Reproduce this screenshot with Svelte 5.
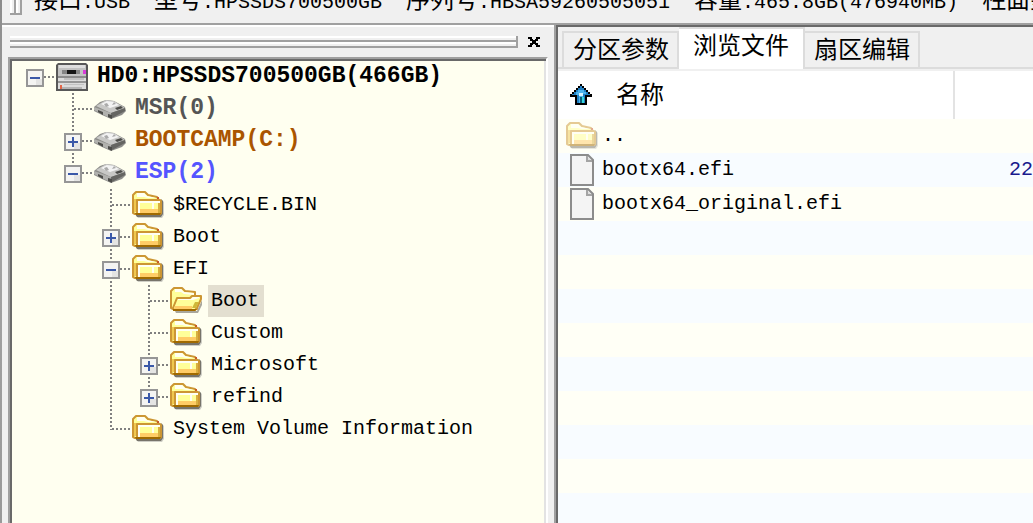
<script>
  const info = [
    ['接口', ':USB'],
    ['型号', ':HPSSDS700500GB'],
    ['序列号', ':HBSA59260505051'],
    ['容量', ':465.8GB(476940MB)'],
    ['柱面数', ':60801']
  ];

  // guides: one entry per indent column; b = blank, v = line, t = tee, e = elbow, r = root
  let nodes = $state([
    { label: 'HD0:HPSSDS700500GB(466GB)', icon: 'disk', guides: 'r', open: true, tone: 'black' },
    { label: 'MSR(0)', icon: 'volume', guides: 'bt', tone: 'gray' },
    { label: 'BOOTCAMP(C:)', icon: 'volume', guides: 'bt', open: false, tone: 'brown' },
    { label: 'ESP(2)', icon: 'volume', guides: 'be', open: true, tone: 'blue' },
    { label: '$RECYCLE.BIN', icon: 'folder', guides: 'bbt' },
    { label: 'Boot', icon: 'folder', guides: 'bbt', open: false },
    { label: 'EFI', icon: 'folder', guides: 'bbt', open: true },
    { label: 'Boot', icon: 'opened', guides: 'bbvt', selected: true },
    { label: 'Custom', icon: 'folder', guides: 'bbvt' },
    { label: 'Microsoft', icon: 'folder', guides: 'bbvt', open: false },
    { label: 'refind', icon: 'folder', guides: 'bbve', open: false },
    { label: 'System Volume Information', icon: 'folder', guides: 'bbe' }
  ]);

  const tabs = ['分区参数', '浏览文件', '扇区编辑'];
  let active = $state(1);

  const files = [
    { name: '..', icon: 'up', size: '' },
    { name: 'bootx64.efi', icon: 'doc', size: '22' },
    { name: 'bootx64_original.efi', icon: 'doc', size: '' }
  ];
</script>

{#snippet folder()}
  <path d="M4 26H30V11L32 13V26L30 29H6Z" fill="#cfcfc6" />
  <path d="M3 25H29V10L31 12V25L29 28H5Z" fill="#77746a" />
  <path d="M1 24V6L4 3H13L16 6L25 8L27 11V24L25 25H3Z" fill="#ffff99" stroke="#cc9633" stroke-width="2" stroke-linejoin="round" />
  <path d="M5 4H12L15 7L24 9H16L12 8H5Z" fill="#fffff0" />
  <path d="M2 10H5V23H2Z" fill="#f0c850" />
  <path d="M25 8H27V10H25Z" fill="#c85a28" />
  <path d="M5 11H28L29 12V24L28 25H5Z" fill="#ffff99" stroke="#cc9633" stroke-width="2" stroke-linejoin="round" />
  <path d="M6 12H28V14H8V24H6Z" fill="#fffff4" />
  <path d="M20 14H22V21H20Z" fill="#fffff0" />
  <path d="M26 14H28V24H26Z" fill="#d9b040" />
  <path d="M8 20H26V24H8Z" fill="#ffcc66" />
  <path d="M3 24H29L28 26H4Z" fill="#a06a00" />
{/snippet}

{#snippet opened()}
  <path d="M5 26H27L32 15V20L28 28H6Z" fill="#a9a79c" />
  <path d="M1 23V6L4 3H12L15 6L25 7V12H27V24H3Z" fill="#ffff99" stroke="#cc9633" stroke-width="2" stroke-linejoin="round" />
  <path d="M5 4H11L14 7L24 8V10L14 9L11 7H5Z" fill="#fffff0" />
  <path d="M3 23L7 13H20L22 11H31V14L27 23L25 25H4Z" fill="#ffff99" stroke="#cc9633" stroke-width="2" stroke-linejoin="round" />
  <path d="M8 14H21L23 12H29V13L23 15H8Z" fill="#fffff4" />
  <path d="M25 17H29L26 23H22Z" fill="#d0b838" />
  <path d="M5 21H22V24H4Z" fill="#ffcc66" />
  <path d="M3 24H27L25 26H3Z" fill="#a06a00" />
{/snippet}

{#snippet disk()}
  <path d="M2 2H30L32 4V30H0V4Z" fill="#585858" />
  <path d="M2 4H30V16H2Z" fill="#c2c2c2" />
  <path d="M3 4H29V7H3Z" fill="#dedede" />
  <path d="M6 9H24V13H6Z" fill="#858585" />
  <path d="M11 9H20V13H11Z" fill="#151515" />
  <path d="M27 9H30V13H27Z" fill="#d93cd9" />
  <path d="M2 15H30V17H2Z" fill="#8c8c8c" />
  <path d="M2 17H30V28H2Z" fill="#dcdcdc" />
  <path d="M8 17H28V19H8ZM8 23H28V24H8Z" fill="#c2c2c2" />
  <path d="M2 20H30V22H2Z" fill="#969696" />
  <path d="M6 26H26V28H6Z" fill="#b4b4b4" />
  <path d="M4 24H6V28H4Z" fill="#e26648" />
{/snippet}

{#snippet volume()}
  <path d="M0 14L6 9L12 7L20 8L31 14L32 18L28 22L17 26L8 22L0 18Z" fill="#8d8d8a" />
  <path d="M2 13L12 7L20 8L31 15L17 20Z" fill="#c8c8c6" />
  <path d="M7 11L13 8L20 9L25 12L16 15Z" fill="#f3f3f3" />
  <path d="M10 11L13 10L15 13L12 14ZM20 9L22 11L18 12Z" fill="#aaa" />
  <path d="M0 14L17 20L18 26L14 24L0 17Z" fill="#b1b1ae" />
  <path d="M17 20L31 15V18L18 25Z" fill="#656562" />
  <path d="M4 17L9 19V22L4 19ZM14 21L18 22V26L14 24ZM21 15L27 13L29 15L23 17Z" fill="#4c4c49" />
{/snippet}

<div class="window">
  <div class="edge"></div>
  <main>
    <header>
      <span class="grip"></span>
      {#each info as [key, value]}
        <span class="fact"><b>{key}</b>{value}</span>
      {/each}
    </header>
    <div class="body">
      <aside>
        <div class="caption">
          <span class="handle"></span>
          <button class="close" aria-label="关闭">
            <svg width="12" height="10" viewBox="0 0 12 10" shape-rendering="crispEdges"><path d="M0 0H4V2H5V3H7V2H8V0H12V2H10V4H8V6H10V8H12V10H8V8H7V7H5V8H4V10H0V8H2V6H4V4H2V2H0Z" /></svg>
          </button>
        </div>
        <ul class="tree">
          {#each nodes as node}
            <li>
              {#each node.guides as g, i}
                <span class="guide">
                  <svg width="38" height="32" viewBox="0 0 38 32" shape-rendering="crispEdges" fill="none" stroke="#808080" stroke-width="2" stroke-dasharray="2 2">
                    {#if g === 'v' || g === 't'}<path d="M17 0V32" />{/if}
                    {#if g === 'e'}<path d="M17 0V17" />{/if}
                    {#if g === 't' || g === 'e' || g === 'r'}<path d="M18 16H38" />{/if}
                  </svg>
                  {#if i === node.guides.length - 1 && node.open !== undefined}
                    <button class="toggle" aria-label={node.label} aria-expanded={node.open} onclick={() => (node.open = !node.open)}>
                      <svg width="18" height="18" viewBox="0 0 18 18" shape-rendering="crispEdges">
                        <path d="M1 1H17V17H1Z" fill="#f4f4f2" stroke="#969696" stroke-width="2" />
                        <path d="M10 10H16V16H10Z" fill="#e4e4e3" />
                        <path d="M4 8H14V10H4Z" fill="#3a58a8" />
                        {#if !node.open}<path d="M8 4H10V14H8Z" fill="#3a58a8" />{/if}
                      </svg>
                    </button>
                  {/if}
                </span>
              {/each}
              <svg class="icon" width="32" height="32" viewBox="0 0 32 32">
                {#if node.icon === 'disk'}{@render disk()}{:else if node.icon === 'volume'}{@render volume()}{:else if node.icon === 'opened'}{@render opened()}{:else}{@render folder()}{/if}
              </svg>
              <span class="label {node.tone ?? ''}" class:bold={node.tone} class:selected={node.selected}>{node.label}</span>
            </li>
          {/each}
        </ul>
      </aside>
      <section>
        <nav>
          {#each tabs as tab, i}
            <button class="tab" class:active={active === i} onclick={() => (active = i)}>{tab}</button>
          {/each}
        </nav>
        <div class="list">
          <table>
            <thead>
              <tr>
                <th class="name">
                  <span class="cell">
                    <svg class="arrow" width="22" height="22" viewBox="0 0 22 22" shape-rendering="crispEdges">
                      <path d="M10 0H12V2H14V4H16V6H18V8H20V10H22V13H17V21H5V13H0V10H2V8H4V6H6V4H8V2H10Z" />
                      <path d="M10 2H12V4H14V6H16V8H18V10H20V11H15V19H7V11H2V10H4V8H6V6H8V4H10Z" fill="#1f7fc4" />
                      <path d="M8 6H14V8H16V10H13V19H9V11H6V8H8Z" fill="#4cb4ee" />
                      <path d="M9 9H13V12H9Z" fill="#d4f2ff" />
                      <path d="M10 13H12V19H10Z" fill="#0b5c78" />
                      <path d="M12 13H14V19H12Z" fill="#35d6dc" />
                    </svg>
                    <span class="heading">名称</span>
                  </span>
                </th>
                <th></th>
              </tr>
            </thead>
            <tbody>
              {#each files as file}
                <tr>
                  <td>
                    <span class="cell">
                      {#if file.icon === 'up'}
                        <svg class="icon faded" width="32" height="32" viewBox="0 0 32 32">{@render folder()}</svg>
                      {:else}
                        <svg class="icon" width="32" height="32" viewBox="0 0 32 32">
                          <path d="M5 1H22L27 6V31H5Z" fill="#f4f4f4" stroke="#8c8c8c" stroke-width="2" />
                          <path d="M20 2H22V6H26V8H20Z" fill="#a4a4a4" />
                          <path d="M22 3L25 6H22Z" fill="#ddd" />
                        </svg>
                      {/if}
                      {file.name}
                    </span>
                  </td>
                  <td class="size">{file.size}</td>
                </tr>
              {/each}
            </tbody>
          </table>
        </div>
      </section>
    </div>
  </main>
</div>

<style>
  :global(body) { margin: 0; background: #f0f0f0; }
  * { box-sizing: border-box; }
  .window {
    display: flex;
    height: 100vh;
    overflow: hidden;
    color: #000;
    font: 20px/24px "Liberation Mono", "Noto Sans CJK SC", monospace;
  }
  button { margin: 0; padding: 0; border: 0; background: none; color: inherit; font: inherit; }
  svg { display: block; flex: none; }
  .edge { flex: none; width: 2px; background: linear-gradient(#8c8c8c, #a4a4a4 40%, #999); }
  main { flex: 1; min-width: 0; display: flex; flex-direction: column; }

  header {
    flex: none;
    display: flex;
    align-items: flex-end;
    gap: 24px;
    height: 25px;
    padding-left: 8px;
    border-bottom: 2px solid #a0a0a0;
    background: #f0f0f0;
    overflow: hidden;
    white-space: nowrap;
  }
  .grip {
    flex: none;
    width: 12px;
    height: 15px;
    margin: 0 -12px 8px 0;
    border-bottom: 2px solid #a0a0a0;
    background: linear-gradient(90deg, #fff 0 2px, #f0f0f0 2px 4px, #a0a0a0 4px 6px, #fff 6px 8px, #f0f0f0 8px 10px, #a0a0a0 10px);
  }
  .fact { padding-bottom: 8px; }
  .fact b { font-size: 24px; font-weight: 400; }

  .body { flex: 1; min-height: 0; display: flex; }
  aside {
    flex: none;
    width: 552px;
    display: flex;
    flex-direction: column;
    padding: 0 6px;
    border-top: 2px solid #fff;
    background: #f0f0f0;
  }
  .caption { display: flex; align-items: center; gap: 10px; height: 30px; padding: 0 8px 0 2px; }
  .handle {
    flex: 1;
    height: 12px;
    border-right: 2px solid #a0a0a0;
    background: linear-gradient(#fff 0 2px, #f0f0f0 2px 4px, #a0a0a0 4px 6px, #fff 6px 8px, #f0f0f0 8px 10px, #a0a0a0 10px);
  }
  .tree {
    flex: 1;
    min-height: 0;
    margin: 0;
    padding: 2px 2px 0 8px;
    list-style: none;
    border: 2px solid #a0a0a0;
    border-right-color: #fff;
    border-bottom: 0;
    box-shadow: inset 2px 2px #696969, inset -2px 0 #e3e3e3;
    background: #fffff0;
    overflow: hidden;
  }
  .tree li { display: flex; align-items: center; height: 32px; }
  .guide { display: grid; flex: none; width: 38px; height: 32px; }
  .guide > * { grid-area: 1 / 1; }
  .toggle { width: 18px; height: 18px; margin: 8px; }
  .label {
    height: 32px;
    margin-left: 6px;
    padding: 0 5px 0 3px;
    line-height: 31px;
    white-space: nowrap;
  }
  .bold { font-size: 23px; font-weight: 700; }
  .gray { color: #555; }
  .brown { color: #a50; }
  .blue { color: #55f; }
  .selected { background: #e3dfd0; }

  section {
    flex: 1;
    min-width: 0;
    display: flex;
    flex-direction: column;
    border-left: 2px solid #a0a0a0;
    background: #f0f0f0;
    box-shadow: inset 2px 2px #696969;
    padding: 2px 0 0 2px;
  }
  nav {
    flex: none;
    display: flex;
    align-items: flex-end;
    height: 42px;
    padding-left: 4px;
    background: linear-gradient(#dcdcdc, #dcdcdc) 0 bottom / 100% 2px no-repeat;
    font-size: 24px;
    line-height: 34px;
    white-space: nowrap;
  }
  .tab { height: 38px; padding: 2px 8px 0 9px; border: 2px solid #dcdcdc; border-width: 2px 2px 2px 0; }
  .tab:first-child { border-left-width: 2px; }
  .tab.active { height: 42px; padding: 0 14px 2px; border-width: 2px 2px 0 0; background: #fff; }
  .list {
    flex: 1;
    min-height: 0;
    overflow: hidden;
    border-top: 2px solid #f0f0f0;
    background: repeating-linear-gradient(#fffff6 0 34px, #f8fcff 34px 68px) 0 48px no-repeat #fff;
  }
  table { width: 100%; border-collapse: collapse; table-layout: fixed; }
  th, td { padding: 0; font-weight: 400; text-align: left; }
  th { height: 48px; background: #fff; font-size: 24px; }
  .name { width: 396px; border-right: 2px solid #e3e3e3; }
  td { height: 34px; }
  .cell { display: flex; align-items: center; gap: 4px; padding-left: 8px; white-space: nowrap; }
  .arrow { margin: 0 20px 0 4px; }
  .heading { padding-top: 4px; }
  .faded { opacity: 0.5; }
  .size { text-align: right; color: #1a1a8c; }
</style>
